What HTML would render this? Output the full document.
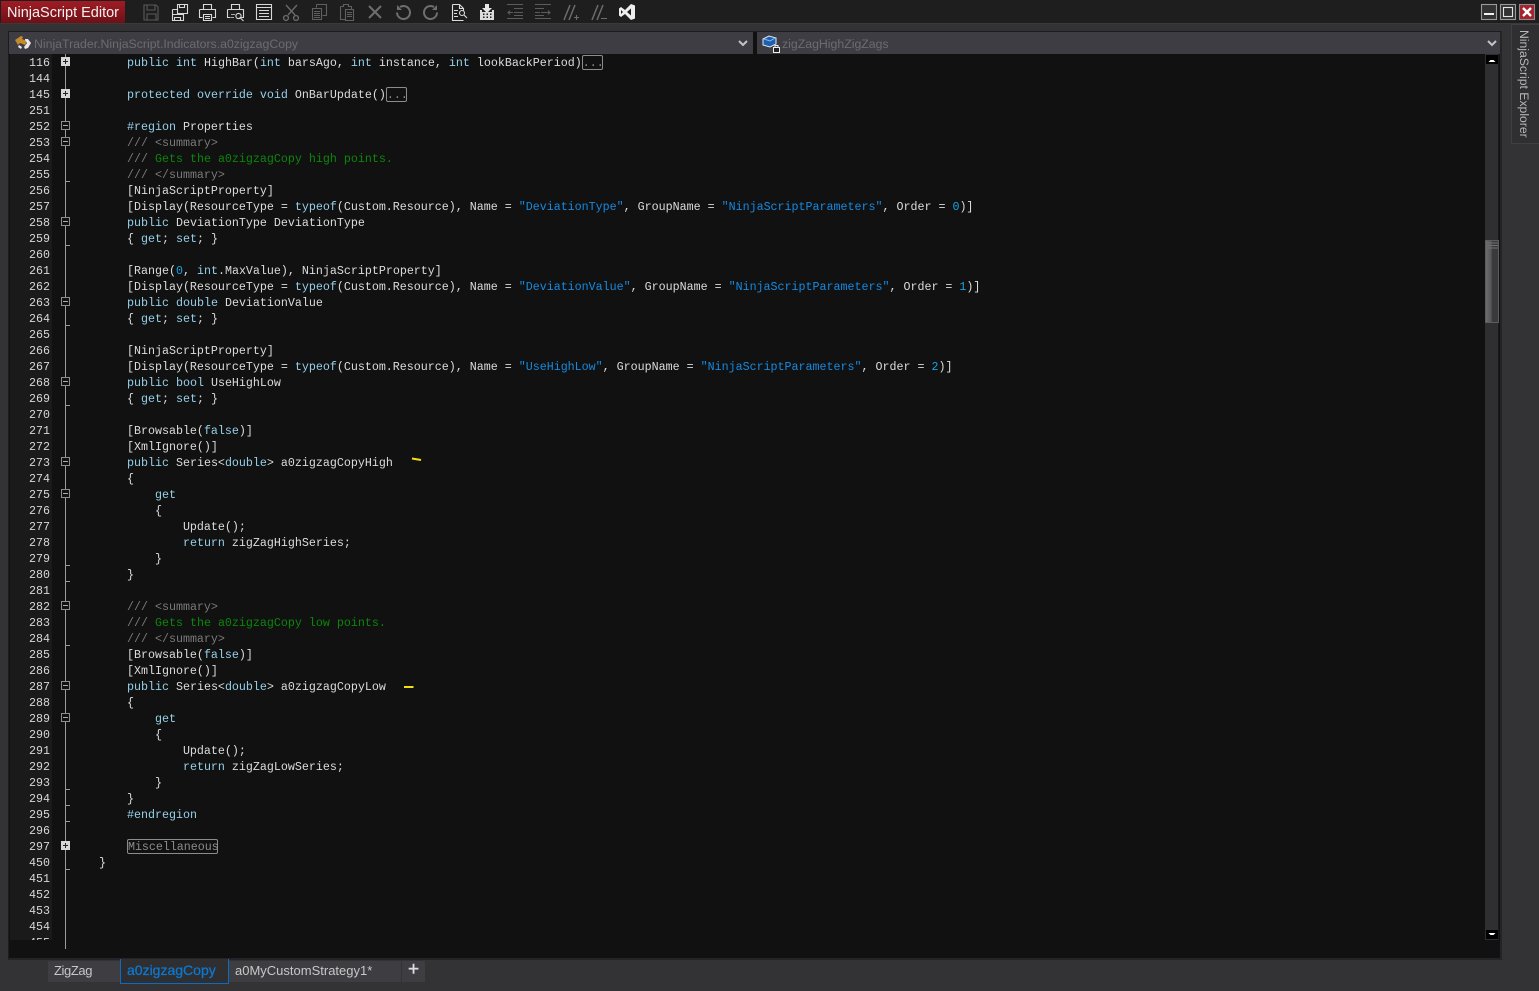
<!DOCTYPE html>
<html><head><meta charset="utf-8"><title>NinjaScript Editor</title>
<style>
html,body{margin:0;padding:0;width:1539px;height:991px;overflow:hidden;background:#333336}
*{box-sizing:border-box}
.a{position:absolute}
#title{left:0;top:0;width:1539px;height:24px;background:#1e1e1e;border-bottom:1px solid #3a3a3c}
#brand{left:1px;top:1px;width:124px;height:22px;background:linear-gradient(#a01c24,#6e1016);color:#f2f2f2;font:14.5px/24px "Liberation Sans",sans-serif;padding-left:6px;white-space:nowrap}
#frame{left:8px;top:31px;width:1494px;height:929px;border:1px solid #1d1d1f;border-right:2px solid #242426;border-bottom:2px solid #242426;background:#111}
.combo{top:32px;height:22px;background:#3d3d43;color:#6c6c70;font:12.3px/24px "Liberation Sans",sans-serif;white-space:nowrap}
#gut{left:10px;top:54px;width:42px;height:886px;background:#1a1a1a;overflow:hidden}
#ed{left:10px;top:54px;width:1475px;height:904px;background:#111;overflow:hidden}
.n{position:absolute;left:0;width:40px;text-align:right;height:16px;font:11.67px/18px "Liberation Mono",monospace;color:#d8d8d8}
pre{margin:0;position:absolute;left:99px;top:55px;font:11.675px/16px "Liberation Mono",monospace;color:#dcdcdc;letter-spacing:0}
i{font-style:normal}
.k{color:#96cfe8}.s{color:#1689e0}.c{color:#0b860b}.d{color:#7a7a7a}.u{color:#16a4e4}
.box{display:inline-block;border:1px solid #8c8c8c;border-radius:2px;height:15px;line-height:14px;vertical-align:top;color:#8c8c8c;overflow:hidden}
.b1{width:21px;margin-top:0}.b2{width:91px;white-space:nowrap;letter-spacing:-.02px}
.fp,.fm{position:absolute;left:61px;width:9px;height:9px}
.fp{background:#d6d6d6}
.fp:before,.fm:before{content:"";position:absolute;left:2px;top:4px;width:5px;height:1px;background:#222}
.fm{background:#111;border:1px solid #8e8e8e}
.fm:before{left:1px;top:3px;background:#aaa}
.fp:after{content:"";position:absolute;left:4px;top:2px;width:1px;height:5px;background:#222}
.t{position:absolute;left:66px;width:4px;height:1px;background:#9a9a9a}
#scroll{left:1485px;top:54px;width:14px;height:886px;background:#2f2f31;border-right:1px solid #1a1a1a}
.tab{top:961px;height:21px;background:#3d3d42;color:#c8c8c8;font:13px/19px "Liberation Sans",sans-serif;white-space:nowrap}
svg{position:absolute;overflow:visible}
</style></head>
<body>
<div class="a" id="title"></div>
<div class="a" id="brand">NinjaScript Editor</div>

<svg style="left:0;top:0" width="1539" height="24" fill="none" stroke-width="1.1">
<g stroke="#5a5a5a"><path d="M144 5h12l2 2v13h-14zM147 5v5h8V5M147 20v-6h9v6"/></g>
<g stroke="#d8d8d8"><path d="M177.500 4.500h10v9h-10zM179.500 4.500v3h5v-3M172.500 9.500h5M172.500 9.500v5M172.500 14.500h11v6h-11zM174.500 20.500v-3h6v3"/>
<path d="M203.500 9.500v-5h8v5M199.500 9.500h16v8h-3M202.500 17.500h-3v-8M203.500 14.500h8v6h-8zM205 16.500h5M205 18.500h5"/>
<path d="M231.500 9.500v-5h8v5M227.500 9.500h16v8h-4M230.500 17.500h-3v-8"/><path d="M231 14.500h4M231 17.500h3" stroke="#aaa"/><circle cx="238.500" cy="16" r="2.600"/><path d="M240.500 18l3 3"/>
<path d="M256.500 4.500h15v15h-15zM256.500 7.500h15M259 10.500h10M259 13.500h10M259 16.500h10"/></g>
<g stroke="#6a6a6a" stroke-width="1.400"><path d="M286 5l9 10M297 5l-9 10"/><circle cx="286" cy="18" r="2.400"/><circle cx="296" cy="18" r="2.400"/></g>
<g stroke="#5f5f5f"><path d="M316.500 4.500h10v11h-4M316.500 4.500v3"/><path d="M312.500 8.500h9v11h-9zM314 11.500h6M314 13.500h6M314 15.500h6M314 17.500h6"/>
<path d="M340.500 6.500h3v-2h5v2h3v3M340.500 6.500v13h5"/><path d="M345.500 9.500h8v11h-8zM347 12.500h5M347 14.500h5M347 16.500h5"/></g>
<g stroke="#6e6e6e" stroke-width="2"><path d="M369 6l12 12M381 6l-12 12"/></g>
<g stroke="#6e6e6e" stroke-width="2"><path d="M400 7a6.500 6.500 0 1 1-3 5.500"/><path d="M434 7a6.500 6.500 0 1 0 3 5.500"/></g>
<path d="M397 5v5h5z" fill="#6e6e6e"/><path d="M437 5v5h-5z" fill="#6e6e6e"/>
<g stroke="#dcdcdc"><path d="M452.500 4.500h7l4 4v2M452.500 4.500v16h11M459.500 4.500v4h4M454 10.500h4M454 13.500h3M454 16.500h4"/><circle cx="462" cy="13" r="2.500"/><path d="M464 15l3 3"/></g>
<path d="M485 4h4v4h3l-5 5-5-5h3z" fill="#e6e6e6"/>
<path d="M480 10h2v2h10v-2h2v10h-14z" fill="#dcdcdc"/>
<path d="M483 13.500h1.500v1.500h-1.500zM486.500 13.500h1.500v1.500h-1.500zM490 13.500h1.500v1.500h-1.500zM483 16.500h1.500v1.500h-1.500zM486.500 16.500h1.500v1.500h-1.500zM490 16.500h1.500v1.500h-1.500z" fill="#1e1e1e"/>
<g stroke="#5c5c5c"><path d="M507 4.500h16M514 8.500h9M514 12.500h9M514 15.500h9M507 18.500h16M513 12.500h-5M510 10.500l-2 2 2 2"/>
<path d="M535 4.500h16M535 8.500h9M535 12.500h5M535 15.500h9M535 18.500h16M541 12.500h9M548 10.500l2 2-2 2"/></g>
<g stroke="#6c6c6c" stroke-width="1.500"><path d="M564 20l6-15M569 20l6-15M592 20l6-15M597 20l6-15"/></g>
<path d="M574 17.500h5M576.500 15v5M601 18.500h6" stroke="#6c6c6c"/>
<path d="M631 4l4 1.500v13l-4 1.500-6-6-4 3-2-1.500v-7l2-1.500 4 3zM631 8.500l-4 3.500 4 3.500zM621 10v4l2-2z" fill="#eee" fill-rule="evenodd"/>
<rect x="1481.500" y="4.500" width="15" height="15" fill="#333" stroke="#9a9a9a"/><rect x="1484" y="13" width="10" height="2" fill="#f2f2f2"/>
<rect x="1500.500" y="4.500" width="15" height="15" fill="#333" stroke="#9a9a9a"/><rect x="1503.500" y="7.500" width="9" height="9" stroke="#e4e4e4"/>
<rect x="1519.500" y="4.500" width="15" height="15" fill="#a5232c" stroke="#8a8a8a"/><path d="M1523 8l8 8M1531 8l-8 8" stroke="#fff" stroke-width="2.400"/>
</svg>

<div class="a" id="frame"></div>
<div class="a combo" style="left:9px;width:744px;padding-left:25px">NinjaTrader.NinjaScript.Indicators.a0zigzagCopy</div>
<div class="a combo" style="left:757px;width:743px;padding-left:25px">zigZagHighZigZags</div>
<svg style="left:0;top:30px" width="1539" height="26" fill="none">
<path d="M15 10l6-4 2 1-1 2 5 2-2 4-5-2-2 2z" fill="#c28a2a"/>
<path d="M25 9l3 0 3 4-3 5-3 1-1-2 3-4-2-3zM19 15l3 2-1 2-3-2z" fill="#e8e8e8"/>
<path d="M739 11l4 4 4-4" stroke="#c4c4c4" stroke-width="2"/>
<path d="M1488 11l4 4 4-4" stroke="#c4c4c4" stroke-width="2"/>
<path d="M763 9l6-3 7 2v6l-6 3-7-2z" fill="#1d5fb0" stroke="#dfe8f2" stroke-width="1"/>
<path d="M764 9l6 2 5-3" stroke="#8fb8e6"/>
<rect x="773.500" y="17.500" width="6" height="5" fill="#222" stroke="#eee"/>
<path d="M775 17.500v-2h3v2" stroke="#eee"/>
</svg>

<div class="a" id="ed"></div>
<div class="a" id="gut" style="height:886px">
<div class="n" style="top:0">116</div><div class="n" style="top:16px">144</div><div class="n" style="top:32px">145</div><div class="n" style="top:48px">251</div><div class="n" style="top:64px">252</div><div class="n" style="top:80px">253</div><div class="n" style="top:96px">254</div><div class="n" style="top:112px">255</div><div class="n" style="top:128px">256</div><div class="n" style="top:144px">257</div><div class="n" style="top:160px">258</div><div class="n" style="top:176px">259</div><div class="n" style="top:192px">260</div><div class="n" style="top:208px">261</div><div class="n" style="top:224px">262</div><div class="n" style="top:240px">263</div><div class="n" style="top:256px">264</div><div class="n" style="top:272px">265</div><div class="n" style="top:288px">266</div><div class="n" style="top:304px">267</div><div class="n" style="top:320px">268</div><div class="n" style="top:336px">269</div><div class="n" style="top:352px">270</div><div class="n" style="top:368px">271</div><div class="n" style="top:384px">272</div><div class="n" style="top:400px">273</div><div class="n" style="top:416px">274</div><div class="n" style="top:432px">275</div><div class="n" style="top:448px">276</div><div class="n" style="top:464px">277</div><div class="n" style="top:480px">278</div><div class="n" style="top:496px">279</div><div class="n" style="top:512px">280</div><div class="n" style="top:528px">281</div><div class="n" style="top:544px">282</div><div class="n" style="top:560px">283</div><div class="n" style="top:576px">284</div><div class="n" style="top:592px">285</div><div class="n" style="top:608px">286</div><div class="n" style="top:624px">287</div><div class="n" style="top:640px">288</div><div class="n" style="top:656px">289</div><div class="n" style="top:672px">290</div><div class="n" style="top:688px">291</div><div class="n" style="top:704px">292</div><div class="n" style="top:720px">293</div><div class="n" style="top:736px">294</div><div class="n" style="top:752px">295</div><div class="n" style="top:768px">296</div><div class="n" style="top:784px">297</div><div class="n" style="top:800px">450</div><div class="n" style="top:816px">451</div><div class="n" style="top:832px">452</div><div class="n" style="top:848px">453</div><div class="n" style="top:864px">454</div><div class="n" style="top:880px">455</div>
</div>

<div class="a" style="left:65px;top:54px;width:1px;height:895px;background:#9a9a9a"></div>
<div class="fp" style="top:57px"></div><div class="fp" style="top:89px"></div>
<div class="fm" style="top:121px"></div><div class="fm" style="top:137px"></div><div class="fm" style="top:217px"></div><div class="fm" style="top:297px"></div><div class="fm" style="top:377px"></div><div class="fm" style="top:457px"></div><div class="fm" style="top:489px"></div><div class="fm" style="top:601px"></div><div class="fm" style="top:681px"></div><div class="fm" style="top:713px"></div>
<div class="fp" style="top:841px"></div>
<div class="t" style="top:181px"></div><div class="t" style="top:245px"></div><div class="t" style="top:325px"></div><div class="t" style="top:405px"></div><div class="t" style="top:565px"></div><div class="t" style="top:581px"></div><div class="t" style="top:645px"></div><div class="t" style="top:789px"></div><div class="t" style="top:805px"></div><div class="t" style="top:821px"></div><div class="t" style="top:869px"></div>

<pre>    <i class="k">public</i> <i class="k">int</i> HighBar(<i class="k">int</i> barsAgo, <i class="k">int</i> instance, <i class="k">int</i> lookBackPeriod)<span class="box b1">...</span>

    <i class="k">protected</i> <i class="k">override</i> <i class="k">void</i> OnBarUpdate()<span class="box b1">...</span>

    <i class="k">#region</i> Properties
    <i class="d">/// &lt;summary&gt;</i>
    <i class="d">///</i> <i class="c">Gets the a0zigzagCopy high points.</i>
    <i class="d">/// &lt;/summary&gt;</i>
    [NinjaScriptProperty]
    [Display(ResourceType = <i class="k">typeof</i>(Custom.Resource), Name = <i class="s">"DeviationType"</i>, GroupName = <i class="s">"NinjaScriptParameters"</i>, Order = <i class="u">0</i>)]
    <i class="k">public</i> DeviationType DeviationType
    { <i class="k">get</i>; <i class="k">set</i>; }

    [Range(<i class="u">0</i>, <i class="k">int</i>.MaxValue), NinjaScriptProperty]
    [Display(ResourceType = <i class="k">typeof</i>(Custom.Resource), Name = <i class="s">"DeviationValue"</i>, GroupName = <i class="s">"NinjaScriptParameters"</i>, Order = <i class="u">1</i>)]
    <i class="k">public</i> <i class="k">double</i> DeviationValue
    { <i class="k">get</i>; <i class="k">set</i>; }

    [NinjaScriptProperty]
    [Display(ResourceType = <i class="k">typeof</i>(Custom.Resource), Name = <i class="s">"UseHighLow"</i>, GroupName = <i class="s">"NinjaScriptParameters"</i>, Order = <i class="u">2</i>)]
    <i class="k">public</i> <i class="k">bool</i> UseHighLow
    { <i class="k">get</i>; <i class="k">set</i>; }

    [Browsable(<i class="k">false</i>)]
    [XmlIgnore()]
    <i class="k">public</i> Series&lt;<i class="k">double</i>&gt; a0zigzagCopyHigh
    {
        <i class="k">get</i>
        {
            Update();
            <i class="k">return</i> zigZagHighSeries;
        }
    }

    <i class="d">/// &lt;summary&gt;</i>
    <i class="d">///</i> <i class="c">Gets the a0zigzagCopy low points.</i>
    <i class="d">/// &lt;/summary&gt;</i>
    [Browsable(<i class="k">false</i>)]
    [XmlIgnore()]
    <i class="k">public</i> Series&lt;<i class="k">double</i>&gt; a0zigzagCopyLow
    {
        <i class="k">get</i>
        {
            Update();
            <i class="k">return</i> zigZagLowSeries;
        }
    }
    <i class="k">#endregion</i>

    <span class="box b2">Miscellaneous</span>
}</pre>

<svg style="left:0;top:0" width="1539" height="991" fill="none">
<path d="M412 458.500l9 1.500" stroke="#f3df10" stroke-width="2"/>
<path d="M404 687h9.500" stroke="#f3df10" stroke-width="2"/>
</svg>

<div class="a" id="scroll"></div>
<div class="a" style="left:1486px;top:55px;width:12px;height:9px;background:#000"></div>
<div class="a" style="left:1486px;top:930px;width:12px;height:9px;background:#000"></div>
<div class="a" style="left:1485px;top:240px;width:14px;height:83px;border:1px solid #5c5c5c;background:linear-gradient(90deg,#6e6e6e,#555 45%,#3a3a3c 50%,#3a3a3c)"></div>
<svg style="left:0;top:0" width="1539" height="991" fill="none">
<path d="M1488.500 62h7l-2-2h-3z" fill="#fff"/>
<path d="M1488.500 933h7l-2 2h-3z" fill="#fff"/>
<path d="M1488 243h10M1488 245.500h10M1488 248h10" stroke="#707070"/>
</svg>

<div class="a" style="left:1511px;top:24px;width:28px;height:120px;background:#2f2f31;border:1px solid #3f3f42;border-right:none"></div>
<div class="a" style="left:1517px;top:30px;width:108px;height:16px;color:#b8b8b8;font:12.2px/16px 'Liberation Sans',sans-serif;white-space:nowrap;transform-origin:0 0;transform:translate(15px,0) rotate(90deg)">NinjaScript Explorer</div>

<div class="a tab" style="left:48px;width:72px;padding-left:6px;letter-spacing:-.4px">ZigZag</div>
<div class="a tab" style="left:120px;top:959px;width:109px;height:25px;background:#2f2f31;border:1px solid #0a6cc4;border-top:none;color:#0d78d0;padding:1px 0 0 6px;font-size:14px;line-height:20px;-webkit-text-stroke:.25px #0d78d0">a0zigzagCopy</div>
<div class="a tab" style="left:229px;width:172px;padding-left:6px">a0MyCustomStrategy1*</div>
<div class="a tab" style="left:402px;width:23px;color:#ddd;text-align:center;font-size:19px;line-height:18px;-webkit-text-stroke:.4px #ddd">+</div>
</body></html>
